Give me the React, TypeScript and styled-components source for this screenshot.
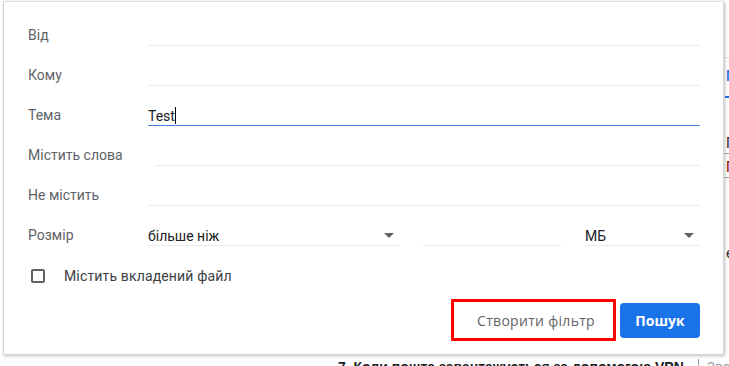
import styled, { createGlobalStyle } from 'styled-components';

const GlobalStyle = createGlobalStyle`
  html, body {
    margin: 0;
    padding: 0;
    background: #fff;
    overflow: hidden;
  }
  body {
    font-family: Roboto, "Liberation Sans", Arial, sans-serif;
  }
`;

const Page = styled.div`
  position: relative;
  width: 729px;
  height: 366px;
  overflow: hidden;
  background: #fff;
`;

const SideColumn = styled.div`
  position: relative;
  margin-left: 725px;
  padding-top: 57px;
  display: flex;
  flex-direction: column;
`;

const SideRule = styled.div<{ $color?: string; $height?: number; $gap?: number }>`
  height: ${(p) => p.$height ?? 1}px;
  background: ${(p) => p.$color ?? '#dadce0'};
  margin-top: ${(p) => p.$gap ?? 0}px;
`;

const SideText = styled.div<{ $color: string; $gap: number; $bold?: boolean }>`
  margin-top: ${(p) => p.$gap}px;
  padding-left: 1px;
  font-size: 14px;
  line-height: 16px;
  font-weight: ${(p) => (p.$bold ? 500 : 400)};
  color: ${(p) => p.$color};
  white-space: nowrap;
`;

const BottomLine = styled.div`
  position: absolute;
  left: 338px;
  top: 359px;
  display: flex;
  align-items: baseline;
  gap: 14px;
  font-family: "Liberation Sans", Arial, sans-serif;
  font-size: 14px;
  line-height: 16px;
  white-space: nowrap;
  b {
    color: #202124;
  }
  span {
    color: #9aa0a6;
    border-left: 1px solid #9aa0a6;
    padding-left: 8px;
  }
`;

const Dialog = styled.div`
  position: absolute;
  left: 3px;
  top: 1px;
  width: 721px;
  height: 354px;
  box-sizing: border-box;
  background: #fff;
  border: 1px solid #d6d6d6;
  border-top-color: #e2e2e2;
  box-shadow: 1px 1px 3px rgba(0, 0, 0, 0.25);
  padding: 13px 23px 0 24px;
  display: flex;
  flex-direction: column;
`;

const Row = styled.div`
  display: flex;
  height: 40px;
`;

const Label = styled.div`
  flex-shrink: 0;
  min-width: 88px;
  padding-right: 32px;
  font-size: 14px;
  line-height: 40px;
  color: #5f6368;
  white-space: nowrap;
`;

const Field = styled.div<{ $active?: boolean; $width?: number }>`
  ${(p) => (p.$width ? `width: ${p.$width}px; flex-shrink: 0;` : 'flex: 1;')}
  height: 31px;
  box-sizing: border-box;
  padding-top: 13px;
  font-size: 14px;
  line-height: 16px;
  color: #202124;
  border-bottom: 1px solid ${(p) => (p.$active ? '#4a80e6' : '#ebebeb')};
  display: flex;
  align-items: flex-start;
`;

const Caret = styled.span`
  display: inline-block;
  width: 1px;
  height: 17px;
  margin-top: -1px;
  background: #000;
`;

const SizeFields = styled.div`
  flex: 1;
  display: flex;
  gap: 23px;
`;

const Arrow = styled.span`
  margin-left: auto;
  margin-right: 6px;
  margin-top: 5px;
  width: 0;
  height: 0;
  border-left: 5px solid transparent;
  border-right: 5px solid transparent;
  border-top: 5px solid #5f6368;
`;

const CheckRow = styled.label`
  display: flex;
  align-items: center;
  height: 40px;
  margin-top: 1px;
  padding-left: 3px;
  gap: 19px;
  font-size: 14px;
  letter-spacing: 0.15px;
  color: #3c4043;
`;

const Box = styled.span`
  width: 14px;
  height: 14px;
  box-sizing: border-box;
  border: 2px solid #5f6368;
  border-radius: 2px;
`;

const Actions = styled.div`
  display: flex;
  justify-content: flex-end;
  align-items: center;
  gap: 4px;
  margin-top: 3px;
`;

const Button = styled.button<{ $primary?: boolean; $marked?: boolean }>`
  font-family: "Open Sans", Roboto, Arial, sans-serif;
  font-size: 14px;
  cursor: pointer;
  box-sizing: border-box;
  border-radius: 4px;
  ${(p) =>
    p.$primary
      ? `
    width: 80px;
    height: 35px;
    background: #1a73e8;
    color: #fff;
    font-weight: 700;
    border: none;
  `
      : `
    background: #fff;
    color: #5f6368;
    font-weight: 500;
    letter-spacing: 0.3px;
    width: 165px;
    height: 42px;
    padding: 0 0 0 5px;
  `}
  ${(p) => (p.$marked ? 'border: 3px solid #f00; border-radius: 1px;' : '')}
`;

export default function App() {
  return (
    <Page>
      <GlobalStyle />
      <SideColumn>
        <SideRule />
        <SideText $color="#1a73e8" $gap={10} $bold>
          M
        </SideText>
        <SideRule $color="#1a73e8" $height={2} $gap={12} />
        <SideText $color="#202124" $gap={37}>
          П
        </SideText>
        <SideRule $color="#9aa0a6" $gap={2} />
        <SideText $color="#8b0000" $gap={5}>
          П
        </SideText>
        <SideRule $color="#9aa0a6" $gap={2} />
        <SideText $color="#202124" $gap={67}>
          є
        </SideText>
      </SideColumn>
      <BottomLine>
        <b>7. Коли пошта завантажується за допомогою VPN</b>
        <span>Звернення</span>
      </BottomLine>
      <Dialog>
        <Row>
          <Label>Від</Label>
          <Field />
        </Row>
        <Row>
          <Label>Кому</Label>
          <Field />
        </Row>
        <Row>
          <Label>Тема</Label>
          <Field $active>
            Test
            <Caret />
          </Field>
        </Row>
        <Row>
          <Label>Містить слова</Label>
          <Field />
        </Row>
        <Row>
          <Label>Не містить</Label>
          <Field />
        </Row>
        <Row>
          <Label>Розмір</Label>
          <SizeFields>
            <Field $width={252}>
              більше ніж
              <Arrow />
            </Field>
            <Field $width={139} />
            <Field>
              МБ
              <Arrow />
            </Field>
          </SizeFields>
        </Row>
        <CheckRow>
          <Box />
          Містить вкладений файл
        </CheckRow>
        <Actions>
          <Button $marked>Створити фільтр</Button>
          <Button $primary>Пошук</Button>
        </Actions>
      </Dialog>
    </Page>
  );
}
